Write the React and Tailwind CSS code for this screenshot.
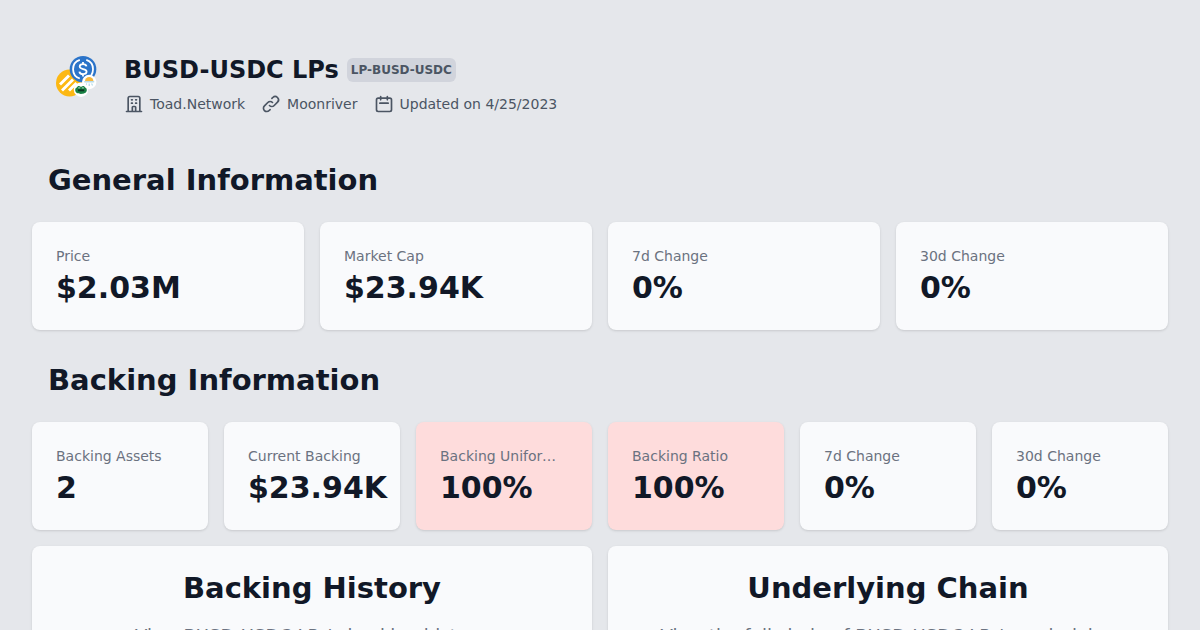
import React from "react";

const general = [
  { label: "Price", value: "$2.03M" },
  { label: "Market Cap", value: "$23.94K" },
  { label: "7d Change", value: "0%" },
  { label: "30d Change", value: "0%" },
];

const backing = [
  { label: "Backing Assets", value: "2" },
  { label: "Current Backing", value: "$23.94K" },
  { label: "Backing Uniformity", value: "100%", alert: true },
  { label: "Backing Ratio", value: "100%", alert: true },
  { label: "7d Change", value: "0%" },
  { label: "30d Change", value: "0%" },
];

const panels = [
  { title: "Backing History", text: "View BUSD-USDC LPs's backing history." },
  { title: "Underlying Chain", text: "View the full chain of BUSD-USDC LPs's underlying" },
];

function PoolLogo() {
  return (
    <svg viewBox="1.5 1.5 60 60" className="size-15 shrink-0" role="img" aria-label="BUSD-USDC pool">
      <circle cx="23" cy="36.5" r="13.5" fill="#fcb813" />
      <g fill="#fff">
        <path d="M21.5 28l2 2-7 7-2-2zM25.5 32l2 2-11 11-2-2zM14.5 35l2 2-2 2-2-2zM29 35.5l2 2-7.500 7.500-2-2z" />
      </g>
      <circle cx="36.500" cy="22.700" r="13.300" fill="#2b74c9" />
      <g fill="none" stroke="#fff" strokeWidth="1.800">
        <path d="M33.300 13.400a9.800 9.800 0 0 0 0 18.600M39.800 13.400a9.800 9.800 0 0 1 0 18.600" />
        <path d="M40 19.900c-.3-1.600-1.600-2.300-3.500-2.300s-3.300.9-3.300 2.500c0 3.400 6.900 1.500 6.900 5 0 1.700-1.500 2.600-3.500 2.600s-3.500-.8-3.700-2.600M36.500 15.400v2.200M36.500 27.700v2.300" />
      </g>
      <circle cx="42.700" cy="35.500" r="7.200" fill="#fff" />
      <path d="M38.500 34.800a4.200 4.200 0 0 1 8.400 0z" fill="#f6b73c" />
      <path d="M38.300 35.300h8.800" stroke="#b8dce8" strokeWidth="1.600" strokeLinecap="round" />
      <path d="M40 37l-.5 2M42.700 37v2.500M45.300 37l.5 2" stroke="#9fd3e6" strokeWidth="1" />
      <circle cx="34.500" cy="43.200" r="7.200" fill="#fff" />
      <path d="M28.700 43.500c0-1.500.8-2.200 1.700-2.400.3-1.900 2.800-2.100 3.600-.8h1c.8-1.300 3.300-1.100 3.600.8.9.2 1.700.9 1.700 2.400 0 2.600-2.600 3.900-5.800 3.900s-5.800-1.300-5.800-3.900z" fill="#188044" />
      <path d="M31.500 42.800h6.200v2h-6.200z" fill="#0b3320" />
      <path d="M31.700 41.400h2M35.400 41.400h2" stroke="#d9f2df" strokeWidth=".8" />
    </svg>
  );
}

function Icon({ d }) {
  return (
    <svg
      viewBox="0 0 24 24"
      className="size-5 shrink-0"
      fill="none"
      stroke="currentColor"
      strokeWidth="2"
      strokeLinecap="round"
      strokeLinejoin="round"
      aria-hidden="true"
    >
      <path d={d} />
    </svg>
  );
}

const details = [
  {
    text: "Toad.Network",
    icon: "M19 21V5a2 2 0 00-2-2H7a2 2 0 00-2 2v16m14 0h2m-2 0h-5m-9 0H3m2 0h5M9 7h1m-1 4h1m4-4h1m-1 4h1m-5 10v-5a1 1 0 011-1h2a1 1 0 011 1v5m-4 0h4",
  },
  {
    text: "Moonriver",
    icon: "M13.828 10.172a4 4 0 00-5.656 0l-4 4a4 4 0 105.656 5.656l1.102-1.101m-.758-4.899a4 4 0 005.656 0l4-4a4 4 0 00-5.656-5.656l-1.100 1.100",
  },
  {
    text: "Updated on 4/25/2023",
    icon: "M8 7V3m8 4V3m-9 8h10M5 21h14a2 2 0 002-2V7a2 2 0 00-2-2H5a2 2 0 00-2 2v12a2 2 0 002 2z",
  },
];

function Stat({ label, value, alert }) {
  return (
    <div className={`min-w-0 rounded-lg p-6 shadow-sm ${alert ? "bg-[#fedcdc]" : "bg-[#f9fafc]"}`}>
      <dt className="truncate text-sm text-[#6b7280]">{label}</dt>
      <dd className="mt-1 text-3xl font-semibold">{value}</dd>
    </div>
  );
}

export default function App() {
  return (
    <main className="min-h-screen bg-[#e5e7eb] px-8 pt-12 pb-8 font-['DejaVu_Sans',sans-serif] text-[#111827]">
      <header className="flex items-start gap-4 px-4">
        <PoolLogo />
        <div className="pt-1.5">
          <div className="flex items-center gap-2">
            <h1 className="text-2xl font-bold">BUSD-USDC LPs</h1>
            <span className="rounded-md bg-[#d1d4dc] px-1 py-1 text-xs font-bold text-[#4b5563]">LP-BUSD-USDC</span>
          </div>
          <ul className="mt-2 flex flex-wrap gap-x-4 text-sm text-[#4b5563]">
            {details.map((item) => (
              <li key={item.text} className="flex items-center gap-1.5">
                <Icon d={item.icon} />
                {item.text}
              </li>
            ))}
          </ul>
        </div>
      </header>

      <h2 className="mt-12 px-4 text-[29px] leading-9 font-bold">General Information</h2>
      <dl className="mt-6 grid grid-cols-4 gap-4">
        {general.map((s) => (
          <Stat key={s.label} {...s} />
        ))}
      </dl>

      <h2 className="mt-8 px-4 text-[29px] leading-9 font-bold">Backing Information</h2>
      <dl className="mt-6 grid grid-cols-6 gap-4">
        {backing.map((s) => (
          <Stat key={s.label} {...s} />
        ))}
      </dl>

      <div className="mt-4 grid grid-cols-2 gap-4">
        {panels.map((p) => (
          <section key={p.title} className="rounded-lg bg-[#f9fafc] p-6 text-center shadow-sm">
            <h2 className="text-[29px] leading-9 font-bold">{p.title}</h2>
            <p className="mt-4 text-lg text-[#6b7280]">{p.text}</p>
          </section>
        ))}
      </div>
    </main>
  );
}
